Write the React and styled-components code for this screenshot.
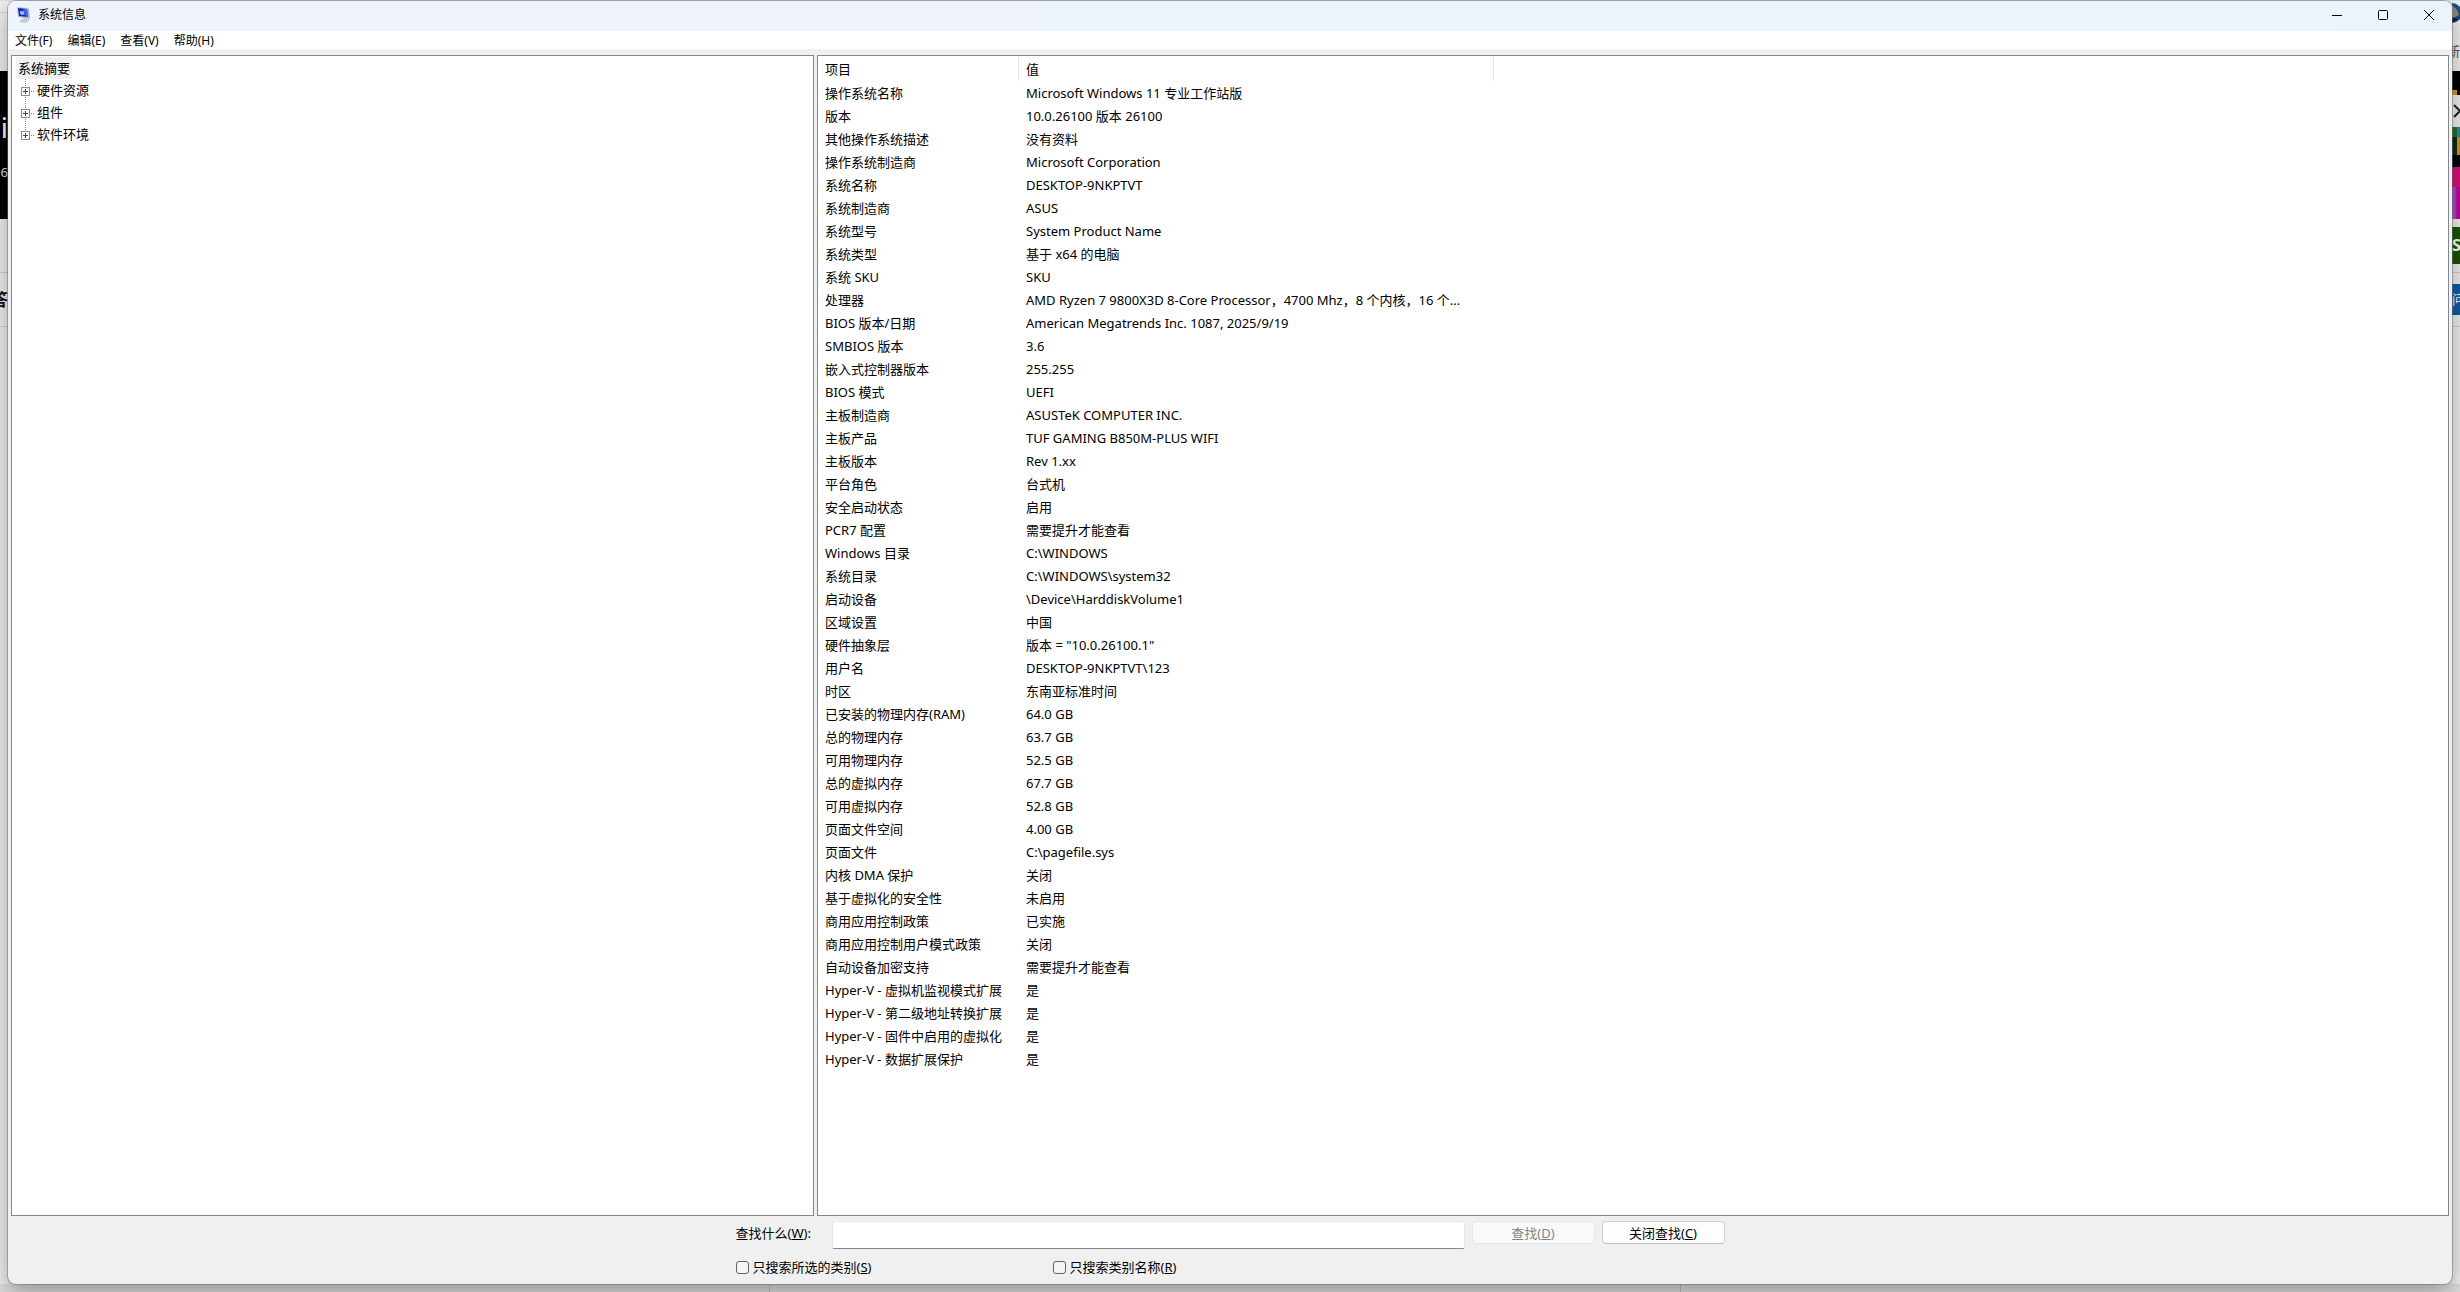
import React from 'react';
import styled, { createGlobalStyle } from 'styled-components';

const GlobalStyle = createGlobalStyle`
  * {
    box-sizing: border-box;
  }

  body {
    margin: 0;
    background: #e4e4e4;
    color: #000;
    font-family: 'Noto Sans', 'Noto Sans CJK SC', sans-serif;
    font-size: 13px;
    line-height: 18px;
  }

  button, input {
    font: inherit;
    color: inherit;
  }
`

const Desktop = styled.div`
  display: grid;
  grid-template-columns: 8px minmax(0, 1fr) 8px;
  grid-template-rows: minmax(0, 1fr) 8px;
  height: 100vh;
  padding-top: 1px;
  overflow: hidden;
`

// page that is open behind the window, only its edges show
const Edge = styled.div`
  overflow: hidden;
  background: #f0f0f0;
`

const EdgeBlock = styled.div`
  height: ${props => props.$height}px;
  background: ${props => props.$color || 'transparent'};
  border-bottom: ${props => props.$line ? '1px solid #d0d0d0' : '0'};
  color: ${props => props.$text || '#222'};
  font-size: ${props => props.$size || 13}px;
  font-weight: ${props => props.$bold ? 700 : 400};
  line-height: ${props => props.$height}px;
  display: flex;
  align-items: center;
  justify-content: ${props => props.$end ? 'flex-end' : 'flex-start'};
  white-space: nowrap;
  overflow: hidden;
`

const BottomEdge = styled.div`
  grid-column: 1 / -1;
  display: grid;
  grid-template-columns: 769fr 911fr 780fr;
  background: #dedede;

  div + div {
    border-left: 1px solid #bdbdbd;
  }
`

const Window = styled.main`
  position: relative;
  display: flex;
  flex-direction: column;
  min-height: 0;
  background: #f0f0f0;
  border-radius: 8px;
  box-shadow: 0 0 0 1px rgba(110, 110, 110, 0.5), 0 8px 24px rgba(0, 0, 0, 0.35);
  overflow: hidden;
`

const TitleBar = styled.header`
  display: flex;
  align-items: center;
  flex: none;
  height: 30px;
  padding: 0 0 2px 8px;
  background: linear-gradient(90deg, #eff3fb, #ebf5f9);
`

const Title = styled.h1`
  flex: 1;
  margin: 0 0 0 6px;
  font-size: 12px;
  font-weight: 400;
`

const CaptionButton = styled.button`
  display: flex;
  align-items: center;
  justify-content: center;
  width: 46px;
  height: 28px;
  padding: 0;
  border: 0;
  background: none;
`

const MenuBar = styled.nav`
  display: flex;
  flex: none;
  gap: 15px;
  height: 18px;
  padding: 2px 0 0 7px;
  background: #fff;
`

const MenuItem = styled.button`
  padding: 0;
  border: 0;
  background: none;
  font-size: 12px;
  line-height: 16px;
`

const Panes = styled.div`
  display: grid;
  grid-template-columns: 803fr 1632fr;
  gap: 3px;
  flex: 1;
  min-height: 0;
  padding: 6px 3px 0;
`

const Pane = styled.section`
  min-width: 0;
  background: #fff;
  border: 1px solid #828790;
  overflow: hidden;
`

const Tree = styled.ul`
  margin: 0;
  padding: 1px 0 0 4px;
  list-style: none;
`

const TreeRoot = styled.span`
  display: block;
  width: max-content;
  height: 22px;
  padding: 0 2px;
  background: #f0f0f0;
  line-height: 22px;
`

const Branch = styled.ul`
  margin: 0;
  padding: 0 0 0 4px;
  list-style: none;
`

const TreeItem = styled.li`
  display: flex;
  align-items: center;
  gap: 3px;
  height: 22px;
`

const Expander = styled.button`
  display: flex;
  padding: 0;
  border: 0;
  background: none;
`

const InfoTable = styled.table`
  width: 676px;
  table-layout: fixed;
  border-collapse: separate;
  border-spacing: 0;
`

const HeadCell = styled.th`
  width: ${props => props.$width}px;
  height: 25px;
  padding: 0 7px;
  border-right: 1px solid #e5e5e5;
  font-weight: 400;
  text-align: left;
`

const Cell = styled.td`
  height: 23px;
  padding: 0 7px;
  overflow: hidden;
  text-overflow: ellipsis;
  white-space: nowrap;
`

const FindBar = styled.form`
  display: grid;
  grid-template-columns: 89px 214px 412px 123px 123px;
  column-gap: 7px;
  justify-content: center;
  flex: none;
  padding: 5px 0 8px;
`

const FindLabel = styled.label`
  padding-top: 3px;
`

const FindInput = styled.input`
  grid-column: 2 / 4;
  height: 28px;
  padding: 0 6px;
  border: 1px solid #e6e6e6;
  border-bottom-color: #868686;
  border-radius: 2px;
  background: #fff;
`

const FindButton = styled.button`
  height: 23px;
  padding: 0;
  border: 1px solid #d0d0d0;
  border-bottom-color: #bcbcbc;
  border-radius: 4px;
  background: #fdfdfd;
  line-height: 18px;

  &:disabled {
    border-color: #e6e6e6;
    background: #f9f9f9;
    color: #838383;
  }
`

const Option = styled.label`
  grid-column: ${props => props.$column};
  display: flex;
  align-items: center;
  gap: 4px;
  height: 18px;
  margin-top: 9px;
`

const CheckBox = styled.input`
  appearance: none;
  width: 13px;
  height: 13px;
  margin: 0;
  border: 1px solid #626262;
  border-radius: 3px;
  background: #f5f5f5;
`

const branches = ['硬件资源', '组件', '软件环境'];

const menus = ['文件(F)', '编辑(E)', '查看(V)', '帮助(H)'];

const rows = [
  ['操作系统名称', 'Microsoft Windows 11 专业工作站版'],
  ['版本', '10.0.26100 版本 26100'],
  ['其他操作系统描述', '没有资料'],
  ['操作系统制造商', 'Microsoft Corporation'],
  ['系统名称', 'DESKTOP-9NKPTVT'],
  ['系统制造商', 'ASUS'],
  ['系统型号', 'System Product Name'],
  ['系统类型', '基于 x64 的电脑'],
  ['系统 SKU', 'SKU'],
  ['处理器', 'AMD Ryzen 7 9800X3D 8-Core Processor，4700 Mhz，8 个内核，16 个...'],
  ['BIOS 版本/日期', 'American Megatrends Inc. 1087, 2025/9/19'],
  ['SMBIOS 版本', '3.6'],
  ['嵌入式控制器版本', '255.255'],
  ['BIOS 模式', 'UEFI'],
  ['主板制造商', 'ASUSTeK COMPUTER INC.'],
  ['主板产品', 'TUF GAMING B850M-PLUS WIFI'],
  ['主板版本', 'Rev 1.xx'],
  ['平台角色', '台式机'],
  ['安全启动状态', '启用'],
  ['PCR7 配置', '需要提升才能查看'],
  ['Windows 目录', 'C:\\WINDOWS'],
  ['系统目录', 'C:\\WINDOWS\\system32'],
  ['启动设备', '\\Device\\HarddiskVolume1'],
  ['区域设置', '中国'],
  ['硬件抽象层', '版本 = "10.0.26100.1"'],
  ['用户名', 'DESKTOP-9NKPTVT\\123'],
  ['时区', '东南亚标准时间'],
  ['已安装的物理内存(RAM)', '64.0 GB'],
  ['总的物理内存', '63.7 GB'],
  ['可用物理内存', '52.5 GB'],
  ['总的虚拟内存', '67.7 GB'],
  ['可用虚拟内存', '52.8 GB'],
  ['页面文件空间', '4.00 GB'],
  ['页面文件', 'C:\\pagefile.sys'],
  ['内核 DMA 保护', '关闭'],
  ['基于虚拟化的安全性', '未启用'],
  ['商用应用控制政策', '已实施'],
  ['商用应用控制用户模式政策', '关闭'],
  ['自动设备加密支持', '需要提升才能查看'],
  ['Hyper-V - 虚拟机监视模式扩展', '是'],
  ['Hyper-V - 第二级地址转换扩展', '是'],
  ['Hyper-V - 固件中启用的虚拟化', '是'],
  ['Hyper-V - 数据扩展保护', '是'],
];

function AppIcon() {
  return (
    <svg width="16" height="16" viewBox="0 0 16 16" aria-hidden="true">
      <path d="M4 13l5-2 4 1v2l-4 2-5-1z" fill="#c6cacd" />
      <path d="M11 1l2 1 1 9-2 1z" fill="#a4adba" />
      <path d="M1 0l11 1 1 11-11-2z" fill="#b4c0dc" />
      <path d="M2 1l9 1 1 8-9-1z" fill="#1226b0" />
      <path d="M7 2l4 0 1 8-2 0z" fill="#3f66e2" />
      <path d="M4 7l1-3 1 4 1-4 1 4" fill="none" stroke="#b4ccff" />
    </svg>
  );
}

function ExpandIcon({ last }) {
  return (
    <svg width="14" height="22" viewBox="0 0 14 22" shapeRendering="crispEdges" aria-hidden="true">
      <path d={last ? 'M5.500 0v8' : 'M5.500 0v22'} stroke="#808080" strokeDasharray="1 1" />
      <path d="M11 12.500h3" stroke="#808080" strokeDasharray="1 1" />
      <rect x="1.500" y="8.500" width="8" height="8" fill="#fafafa" stroke="#8c8c8c" />
      <path d="M3 12.500h5M5.500 10v5" stroke="#2b4596" />
    </svg>
  );
}

function App() {
  return (
    <Desktop>
      <GlobalStyle />
      <Edge aria-hidden="true">
        <EdgeBlock $height={12} $line />
        <EdgeBlock $height={58} />
        <EdgeBlock $height={36} $color="#000" />
        <EdgeBlock $height={40} $color="#000" $text="#fff" $size={28} $end>li</EdgeBlock>
        <EdgeBlock $height={50} $color="#000" $text="#ddd" $end>6</EdgeBlock>
        <EdgeBlock $height={22} $color="#000" />
        <EdgeBlock $height={54} $line />
        <EdgeBlock $height={54} $line $bold $size={17} $text="#111" $end>答</EdgeBlock>
      </Edge>
      <Window>
        <TitleBar>
          <AppIcon />
          <Title>系统信息</Title>
          <CaptionButton type="button" aria-label="最小化">
            <svg width="10" height="10" fill="none" stroke="#000"><path d="M0 5.500h10" /></svg>
          </CaptionButton>
          <CaptionButton type="button" aria-label="最大化">
            <svg width="10" height="10" fill="none" stroke="#000"><rect x=".5" y=".5" width="9" height="9" rx="1" /></svg>
          </CaptionButton>
          <CaptionButton type="button" aria-label="关闭">
            <svg width="10" height="10" fill="none" stroke="#000"><path d="M0 0l10 10M10 0L0 10" /></svg>
          </CaptionButton>
        </TitleBar>
        <MenuBar>
          {menus.map(menu => <MenuItem key={menu} type="button">{menu}</MenuItem>)}
        </MenuBar>
        <Panes>
          <Pane>
            <Tree>
              <li>
                <TreeRoot>系统摘要</TreeRoot>
                <Branch>
                  {branches.map((name, i) => (
                    <TreeItem key={name}>
                      <Expander type="button" aria-label={name}>
                        <ExpandIcon last={i === branches.length - 1} />
                      </Expander>
                      {name}
                    </TreeItem>
                  ))}
                </Branch>
              </li>
            </Tree>
          </Pane>
          <Pane>
            <InfoTable>
              <thead>
                <tr>
                  <HeadCell $width={201}>项目</HeadCell>
                  <HeadCell $width={475}>值</HeadCell>
                </tr>
              </thead>
              <tbody>
                {rows.map(([item, value]) => (
                  <tr key={item}>
                    <Cell>{item}</Cell>
                    <Cell>{value}</Cell>
                  </tr>
                ))}
              </tbody>
            </InfoTable>
          </Pane>
        </Panes>
        <FindBar onSubmit={e => e.preventDefault()}>
          <FindLabel htmlFor="find">查找什么(<u>W</u>):</FindLabel>
          <FindInput id="find" type="text" />
          <FindButton type="submit" disabled>查找(<u>D</u>)</FindButton>
          <FindButton type="button">关闭查找(<u>C</u>)</FindButton>
          <Option $column="1 / 3">
            <CheckBox type="checkbox" />
            <span>只搜索所选的类别(<u>S</u>)</span>
          </Option>
          <Option $column="3">
            <CheckBox type="checkbox" />
            <span>只搜索类别名称(<u>R</u>)</span>
          </Option>
        </FindBar>
      </Window>
      <Edge aria-hidden="true">
        <EdgeBlock $height={22}>
          <svg width="8" height="22">
            <circle cx="0" cy="12" r="10" fill="#1d4f86" />
            <path d="M0 4l5 5 2 5-7 4z" fill="#8f8a78" />
            <path d="M0 16l6 2-6 4z" fill="#141c4a" />
          </svg>
        </EdgeBlock>
        <EdgeBlock $height={8} />
        <EdgeBlock $height={40} $text="#555" $end>新</EdgeBlock>
        <EdgeBlock $height={19} $color="#000" />
        <EdgeBlock $height={5} $color="linear-gradient(90deg, #d99c1c 5px, #000 5px)" />
        <EdgeBlock $height={32}>
          <svg width="8" height="14" fill="none" stroke="#222" strokeWidth="2">
            <path d="M2 1l6 6-6 6" />
          </svg>
        </EdgeBlock>
        <EdgeBlock $height={10} $color="linear-gradient(90deg, #2b6b2b 5px, #2688b8 5px)" />
        <EdgeBlock $height={18} $color="linear-gradient(90deg, #06301c 5px, #dc9418 5px)" />
        <EdgeBlock $height={12} $color="#02040e" />
        <EdgeBlock $height={20} $color="#d8107c" />
        <EdgeBlock $height={32} $color="linear-gradient(90deg, #a84cd0 3px, #c4009c 5px)" />
        <EdgeBlock $height={8} />
        <EdgeBlock $height={37} $color="#1c5406" $text="#fff" $bold $size={16}>SO</EdgeBlock>
        <EdgeBlock $height={9} $line />
        <EdgeBlock $height={11} />
        <EdgeBlock $height={31} $color="#0e5ca8" $text="#fff">问</EdgeBlock>
        <EdgeBlock $height={12} $line />
      </Edge>
      <BottomEdge aria-hidden="true">
        <div />
        <div />
        <div />
      </BottomEdge>
    </Desktop>
  );
}

export default App;
